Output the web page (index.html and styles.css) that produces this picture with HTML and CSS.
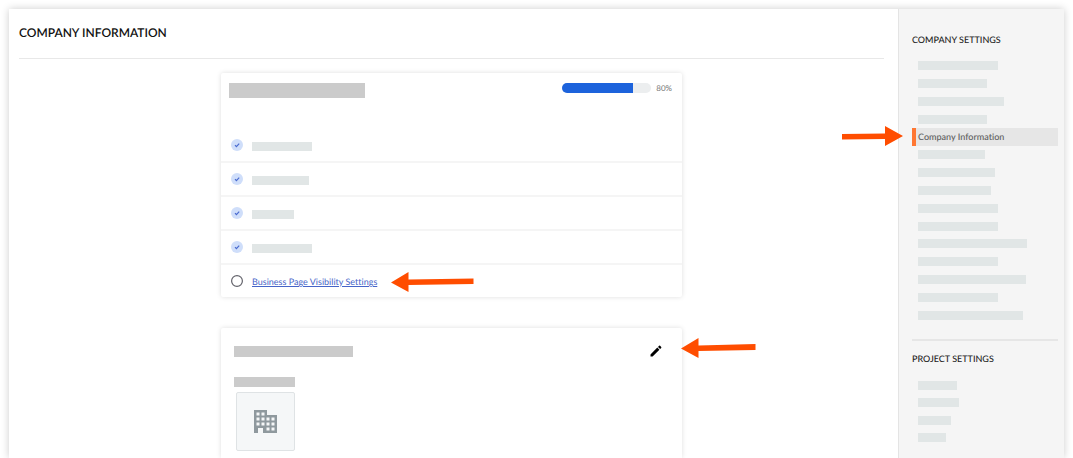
FILE: index.html
```
<!DOCTYPE html>
<html lang="en">
<head>
    <meta charset="UTF-8">
    <title>Company Information</title>
    <link rel="stylesheet" href="styles.css">
</head>
<body>
<div class="frame">
    <main class="main">
        <h1 class="title">COMPANY INFORMATION</h1>

        <section class="card">
            <div class="card-head">
                <span class="block block-name"></span>
                <div class="status">
                    <div class="progress" role="progressbar" aria-valuenow="80" aria-label="Profile progress">
                        <div class="progress-fill" style="width: 80%"></div>
                    </div>
                    <span class="percent">80%</span>
                </div>
            </div>
            <ul class="steps">
                <li>
                    <svg class="check" viewBox="0 0 12 12"><circle cx="6" cy="6" r="6"/><path d="M4 6.2l1.4 1.4 2.8-3"/></svg>
                    <span class="bar w60"></span>
                </li>
                <li>
                    <svg class="check" viewBox="0 0 12 12"><circle cx="6" cy="6" r="6"/><path d="M4 6.2l1.4 1.4 2.8-3"/></svg>
                    <span class="bar w57"></span>
                </li>
                <li>
                    <svg class="check" viewBox="0 0 12 12"><circle cx="6" cy="6" r="6"/><path d="M4 6.2l1.4 1.4 2.8-3"/></svg>
                    <span class="bar w42"></span>
                </li>
                <li>
                    <svg class="check" viewBox="0 0 12 12"><circle cx="6" cy="6" r="6"/><path d="M4 6.2l1.4 1.4 2.8-3"/></svg>
                    <span class="bar w60"></span>
                </li>
                <li class="todo">
                    <svg class="ring" viewBox="0 0 12 12"><circle cx="6" cy="6" r="5.4"/></svg>
                    <a class="step-link" href="#">Business Page Visibility Settings
                        <svg class="arrow arrow-link" viewBox="0 0 83 20"><path d="M0 10.500L17.500 0v7.500L82.500 6.500v5.500L17.500 13v7z"/></svg>
                    </a>
                </li>
            </ul>
        </section>

        <section class="card card-info">
            <div class="info-head">
                <span class="block block-heading"></span>
                <button class="edit" type="button" aria-label="Edit">
                    <svg viewBox="0 0 12 12"><path d="M0.500 9.400L7.300 2.600l2.100 2.100L2.600 11.500H0.500zM8 1.900L9.100 0.800q0.500-0.400 1 0l1.100 1.100q0.400 0.500 0 1L10.100 4z"/></svg>
                </button>
            </div>
            <span class="block block-label"></span>
            <div class="logo">
                <svg viewBox="0 0 23 23"><path fill-rule="evenodd" d="M0 0h13v5h10v18H9v-5H4v5H0zM2.500 2.500v3h3v-3zM7.500 2.500v3h3v-3zM2.500 7.500v3h3v-3zM7.500 7.500v3h3v-3zM12.500 7.500v3h3v-3zM17.500 7.500v3h3v-3zM2.500 12.500v3h3v-3zM7.500 12.500v3h3v-3zM12.500 12.500v3h3v-3zM17.500 12.500v3h3v-3zM12.500 17.500v3h3v-3zM17.500 17.500v3h3v-3z"/></svg>
            </div>
            <svg class="arrow arrow-edit" viewBox="0 0 75 20"><path d="M0 10.500L17.500 0v7.500L74.500 6v6L17.500 13v7z"/></svg>
        </section>
    </main>

    <aside class="sidebar">
        <h2>COMPANY SETTINGS</h2>
        <ul class="menu">
            <li><span class="bar w80"></span></li>
            <li><span class="bar w69"></span></li>
            <li><span class="bar w86"></span></li>
            <li><span class="bar w69"></span></li>
            <li class="active">
                <a href="#">Company Information</a>
                <svg class="arrow arrow-menu" viewBox="0 0 61 20"><path d="M61 10L43 0v7.500L0 8v5.500L43 13v7z"/></svg>
            </li>
            <li><span class="bar w67"></span></li>
            <li><span class="bar w77"></span></li>
            <li><span class="bar w73"></span></li>
            <li><span class="bar w80"></span></li>
            <li><span class="bar w80"></span></li>
            <li><span class="bar w109"></span></li>
            <li><span class="bar w80"></span></li>
            <li><span class="bar w108"></span></li>
            <li><span class="bar w80"></span></li>
            <li><span class="bar w105"></span></li>
        </ul>
        <h2 class="project">PROJECT SETTINGS</h2>
        <ul class="menu menu-project">
            <li><span class="bar w39"></span></li>
            <li><span class="bar w41"></span></li>
            <li><span class="bar w33"></span></li>
            <li><span class="bar w28"></span></li>
        </ul>
    </aside>
</div>
</body>
</html>
```

FILE: styles.css
```
* {
    margin: 0;
    padding: 0;
    box-sizing: border-box;
}

body {
    background: #fff;
    font-family: Lato, "Liberation Sans", sans-serif;
    font-variant-ligatures: none;
    text-rendering: geometricPrecision;
    color: #222;
}

ul {
    list-style: none;
}

svg {
    display: block;
}

.frame {
    display: flex;
    min-height: calc(100vh - 9px);
    margin: 9px 9px 0;
    background: #fff;
    box-shadow: 0 0 8px rgba(0, 0, 0, .2);
}

/* main column */
.main {
    flex: 1;
    display: flex;
    flex-direction: column;
    padding: 0 14px 0 10px;
}

.title {
    height: 50px;
    border-bottom: 1px solid #e8e8e8;
    font-size: 12px;
    font-weight: 600;
    line-height: 48px;
    color: #111;
}

.card {
    position: relative;
    width: 100%;
    max-width: 461px;
    margin: 14px auto 0;
    border-radius: 2px;
    background: #fff;
    box-shadow: 0 0 5px rgba(0, 0, 0, .13);
}

.card-head {
    display: flex;
    justify-content: space-between;
    align-items: flex-start;
    height: 56px;
    padding: 10px 10px 0 8px;
}

.block {
    display: block;
    background: #cbcbcb;
}

.block-name {
    width: 136px;
    height: 15px;
}

.block-heading {
    width: 119px;
    height: 11px;
}

.block-label {
    width: 61px;
    height: 10px;
}

.bar {
    display: block;
    height: 9px;
    background: #e1e6e6;
}

.w28 { width: 28px; }
.w33 { width: 33px; }
.w39 { width: 39px; }
.w41 { width: 41px; }
.w42 { width: 42px; }
.w57 { width: 57px; }
.w60 { width: 60px; }
.w67 { width: 67px; }
.w69 { width: 69px; }
.w73 { width: 73px; }
.w77 { width: 77px; }
.w80 { width: 80px; }
.w86 { width: 86px; }
.w105 { width: 105px; }
.w108 { width: 108px; }
.w109 { width: 109px; }

.status {
    display: flex;
    align-items: center;
    gap: 5px;
}

.progress {
    width: 89px;
    height: 10px;
    border-radius: 5px;
    background: #eceeef;
    overflow: hidden;
}

.progress-fill {
    height: 100%;
    background: #1d63dc;
}

.percent {
    font-size: 8px;
    line-height: 10px;
    color: #777;
}

.steps li {
    display: flex;
    align-items: center;
    gap: 9px;
    height: 34px;
    padding-left: 10px;
    border-bottom: 2px solid #f5f5f5;
}

.steps .bar {
    margin-top: 2px;
}

.steps .todo {
    height: 32px;
    border-bottom: 0;
}

.check, .ring {
    width: 12px;
    height: 12px;
}

.check circle {
    fill: #cfdefa;
}

.check path {
    fill: none;
    stroke: #4a6bd0;
    stroke-width: 1.2;
}

.ring circle {
    fill: none;
    stroke: #63636b;
    stroke-width: 1.2;
}

.step-link {
    position: relative;
    margin-top: 2px;
    font-size: 9px;
    line-height: 12px;
    color: #4664c8;
}

.card-info {
    flex: 1;
    margin-top: 31px;
    padding: 17px 20px 7px 13px;
    border-radius: 2px 2px 0 0;
}

.info-head {
    display: flex;
    justify-content: space-between;
    align-items: center;
    height: 12px;
    margin-bottom: 20px;
}

.edit {
    width: 12px;
    height: 12px;
    border: 0;
    background: none;
    cursor: pointer;
}

.logo {
    display: flex;
    align-items: center;
    justify-content: center;
    width: 59px;
    height: 59px;
    margin: 5px 0 0 2px;
    border: 1px solid #dfe3e5;
    border-radius: 2px;
    background: #f5f7f8;
}

.logo svg {
    width: 23px;
    height: 23px;
    fill: #8f999e;
}

/* arrows */
.arrow {
    position: absolute;
    height: 20px;
    fill: #ff4d00;
}

.arrow-link {
    top: -4px;
    left: calc(100% + 14px);
    width: 83px;
}

.arrow-edit {
    top: 10px;
    left: calc(100% - 1px);
    width: 75px;
}

.arrow-menu {
    top: -2px;
    right: calc(100% + 13px);
    width: 61px;
}

/* sidebar */
.sidebar {
    width: 166px;
    padding: 23px 6px 0 13px;
    border-left: 1px solid #e4e4e4;
    background: #f5f5f5;
}

.sidebar h2 {
    font-size: 9px;
    font-weight: 500;
    line-height: 16px;
    color: #222;
}

.menu {
    display: grid;
    grid-auto-rows: 1fr;
    height: 267px;
    margin-top: 9px;
}

.menu li {
    display: flex;
    align-items: center;
    padding-left: 6px;
}

.menu .active {
    position: relative;
    padding-left: 2px;
    border-left: 4px solid #ff7733;
    background: #e6e6e6;
}

.menu a {
    font-size: 9px;
    font-weight: 600;
    line-height: 16px;
    color: #666;
    text-decoration: none;
}

.sidebar .project {
    margin-top: 15px;
    padding-top: 10px;
    border-top: 2px solid #e6e6e6;
}

.menu-project {
    height: 69px;
    margin-top: 10px;
}
```
